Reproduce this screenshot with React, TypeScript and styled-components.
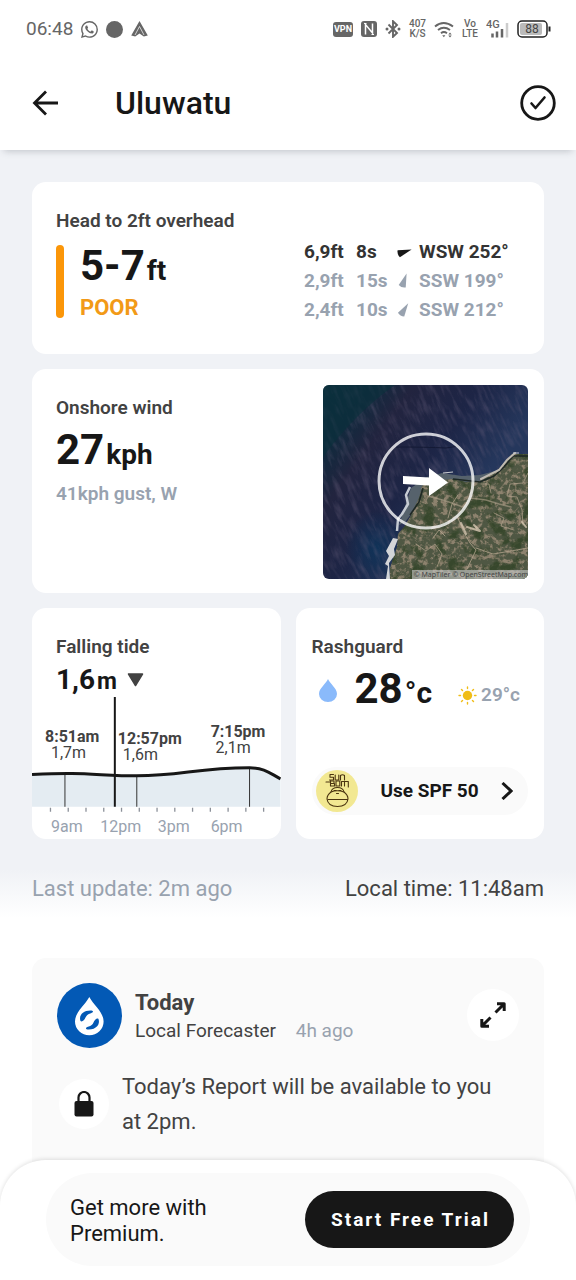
import React from "react";
import styled, { createGlobalStyle } from "styled-components";
import { BsWhatsapp } from "react-icons/bs";

const GlobalStyle = createGlobalStyle`
  *, *::before, *::after { box-sizing: border-box; }
  body {
    margin: 0;
    background: #fff;
    color: #171717;
    font-family: Roboto, "Liberation Sans", sans-serif;
  }
  h1, h2, p { margin: 0; }
  button { font: inherit; color: inherit; border: 0; padding: 0; background: none; cursor: pointer; }
  svg { display: block; }
`;

const ink = "#171717";
const charcoal = "#424242";
const slate = "#98a2af";

/* ---------- top of the page ---------- */

const StatusBar = styled.div`
  display: flex;
  align-items: center;
  justify-content: space-between;
  height: 58px;
  padding: 0 25px 0 26px;
  color: #666;
`;

const StatusGroup = styled.div<{ $gap: number }>`
  display: flex;
  align-items: center;
  gap: ${(p) => p.$gap}px;
`;

const Clock = styled.span`
  font-size: 19px;
  line-height: 24px;
`;

const Dot = styled.span`
  width: 17px;
  height: 17px;
  border-radius: 50%;
  background: #666;
`;

const VpnTag = styled.span`
  padding: 0 1px;
  border-radius: 3px;
  background: #666;
  color: #fff;
  font-size: 9px;
  font-weight: 700;
  line-height: 15px;
`;

const TinyStack = styled.span`
  display: flex;
  flex-direction: column;
  align-items: center;
  font-size: 10px;
  font-weight: 500;
  line-height: 10px;
`;

const Header = styled.header`
  position: relative;
  display: flex;
  align-items: center;
  height: 92px;
  padding: 0 20px 2px 32px;
  box-shadow: 0 5px 7px -4px rgba(60, 70, 80, 0.28);
`;

const PlaceName = styled.h1`
  flex: 1;
  padding-left: 57px;
  font-size: 32px;
  font-weight: 500;
  line-height: 40px;
`;

/* ---------- conditions ---------- */

const Conditions = styled.section`
  display: flex;
  flex-direction: column;
  gap: 15px;
  padding: 32px 32px 15px;
  background: linear-gradient(to top, #fff, #f0f2f6 48px);
`;

const Card = styled.article`
  border-radius: 14px;
  background: #fff;
  overflow: hidden;
`;

const SurfCard = styled(Card)`
  display: flex;
  justify-content: space-between;
  padding: 26px 32px 30px 24px;
`;

const WindCard = styled(Card)`
  display: flex;
  justify-content: space-between;
  padding: 16px 16px 14px 24px;
`;

const Halves = styled.div`
  display: grid;
  grid-template-columns: 1fr 1fr;
  gap: 15px;
`;

const TideCard = styled(Card)`
  display: flex;
  flex-direction: column;
`;

const GearCard = styled(Card)`
  display: flex;
  flex-direction: column;
  padding: 26px 16px 24px;
`;

const Label = styled.h2`
  color: ${charcoal};
  font-size: 19px;
  font-weight: 600;
  line-height: 25px;
`;

const Reading = styled.p<{ $size: number; $line: number }>`
  font-size: ${(p) => p.$size}px;
  font-weight: 700;
  line-height: ${(p) => p.$line}px;
  white-space: nowrap;
`;

const Unit = styled.span<{ $size: number }>`
  margin-left: 2px;
  font-size: ${(p) => p.$size}px;
  line-height: 0;
`;

const Rating = styled.div`
  position: relative;
  margin-top: 12px;
  padding-left: 24px;

  &::before {
    content: "";
    position: absolute;
    inset: 0 auto 0 0;
    width: 8px;
    border-radius: 4px;
    background: #fb9609;
  }
`;

const RatingWord = styled.p`
  padding-top: 11px;
  color: #f29a17;
  font-size: 22px;
  font-weight: 700;
  line-height: 20px;
`;

const Swells = styled.div`
  display: flex;
  flex-direction: column;
  padding-top: 29px;
`;

const Swell = styled.div<{ $main?: boolean }>`
  display: grid;
  grid-template-columns: 52px 41px 22px 93px;
  align-items: center;
  color: ${(p) => (p.$main ? "#333" : slate)};
  font-size: 19px;
  font-weight: 700;
  line-height: 29px;
  white-space: nowrap;
`;

const WindText = styled.div`
  padding-top: 10px;
`;

const Gust = styled.p`
  padding-top: 2px;
  color: ${slate};
  font-size: 19px;
  font-weight: 600;
  line-height: 24px;
`;

const MapFrame = styled.figure`
  position: relative;
  flex: 0 0 205px;
  height: 194px;
  margin: 0;
  border-radius: 6px;
  overflow: hidden;
`;

const MapCredit = styled.figcaption`
  position: absolute;
  right: 0;
  bottom: 0;
  padding-left: 2px;
  background: rgba(205, 205, 205, 0.6);
  color: #444;
  font: 7px/9px "Noto Sans", sans-serif;
  white-space: nowrap;
`;

const TideHead = styled.div`
  padding: 26px 24px 0;
`;

const TideNow = styled.div`
  display: flex;
  align-items: center;
  gap: 10px;
  height: 38px;
  padding-top: 4px;
`;

const Temperatures = styled.div`
  display: flex;
  align-items: center;
  height: 60px;
`;

const WaterTemp = styled.div`
  display: flex;
  flex: 1;
  align-items: center;
  gap: 18px;
  padding-left: 7px;
`;

const AirTemp = styled.p`
  display: flex;
  align-items: center;
  gap: 4px;
  padding: 12px 8px 0 0;
  color: ${slate};
  font-size: 19px;
  font-weight: 600;
  line-height: 24px;
`;

const SunscreenLink = styled.a`
  display: flex;
  align-items: center;
  height: 48px;
  margin-top: auto;
  padding: 0 15px 0 4px;
  border-radius: 24px;
  background: #fafafa;
  color: ${ink};
  font-size: 19px;
  font-weight: 700;
  text-decoration: none;
  white-space: nowrap;

  span { flex: 1; padding-left: 23px; }
`;

const Times = styled.div`
  display: flex;
  justify-content: space-between;
  padding-top: 21px;
  color: ${charcoal};
  font-size: 22px;
  line-height: 28px;
`;

const Muted = styled.span`
  color: ${slate};
`;

/* ---------- report ---------- */

const Report = styled.section`
  display: grid;
  gap: 21px;
  margin: 40px 32px 0;
  padding: 25px 25px 80px;
  border-radius: 14px;
  background: #fafafa;
  color: ${charcoal};
`;

const ReportHead = styled.div`
  display: flex;
  align-items: center;
  gap: 13px;
`;

const Byline = styled.div`
  flex: 1;
  padding-top: 4px;
  font-size: 19px;
  line-height: 28px;
`;

const ReportTitle = styled.h2`
  font-size: 22px;
  font-weight: 700;
  line-height: 28px;
`;

const Ago = styled(Muted)`
  padding-left: 15px;
`;

const RoundButton = styled.button`
  display: grid;
  place-items: center;
  width: 52px;
  height: 52px;
  border-radius: 50%;
  background: #fff;
`;

const ReportBody = styled.div`
  display: flex;
  align-items: center;
  gap: 13px;
  padding: 0 16px 0 2px;
  font-size: 22px;
  line-height: 35px;
`;

const LockBadge = styled.span`
  display: grid;
  flex: none;
  place-items: center;
  width: 50px;
  height: 50px;
  border-radius: 50%;
  background: #fff;
`;

/* ---------- premium sheet ---------- */

const Sheet = styled.aside`
  position: fixed;
  inset: auto 0 0;
  padding: 13px 46px 14px;
  border-radius: 46px 46px 0 0;
  background: #fff;
  box-shadow: 0 -1px 4px rgba(0, 0, 0, 0.12);
`;

const Offer = styled.div`
  display: flex;
  align-items: center;
  justify-content: space-between;
  padding: 18px 16px 18px 24px;
  border-radius: 47px;
  background: #fafafa;
`;

const OfferText = styled.p`
  max-width: 170px;
  padding-top: 3px;
  font-size: 22px;
  line-height: 26px;
`;

const TrialButton = styled.button`
  width: 209px;
  height: 57px;
  padding-left: 2px;
  border-radius: 29px;
  background: #171717;
  color: #fff;
  font-size: 19px;
  font-weight: 700;
  letter-spacing: 2px;
`;

/* ---------- drawings ---------- */

const NavMark = () => (
  <svg width="17" height="16" viewBox="0 0 17 16">
    <path d="M8.500 0L16.800 14.500l-4 1-4.300-3-4.300 3-4-1z" fill="#666" />
    <path d="M8.500 5.500l-4.500 8.500M8.500 5.500l4.500 8.500" stroke="#fff" strokeWidth="0.700" />
  </svg>
);

const NfcMark = () => (
  <svg width="16" height="16" viewBox="0 0 16 16">
    <rect width="16" height="16" rx="3" fill="#666" />
    <path d="M4.500 13.500V3.500L11.500 12V2.500" fill="none" stroke="#fff" strokeWidth="1.500" />
    <path d="M3 2.500h2.500M10.500 13.500H13" fill="none" stroke="#fff" strokeWidth="1" />
  </svg>
);

const BluetoothMark = () => (
  <svg width="16" height="18" viewBox="0 0 16 18">
    <path d="M3.500 4.500L12 13 8 16.800V1.200L12 5 3.500 13.500" fill="none" stroke="#666" strokeWidth="1.900" />
    <circle cx="2" cy="9" r="1.500" fill="#666" />
    <circle cx="14" cy="9" r="1.500" fill="#666" />
  </svg>
);

const WifiMark = () => (
  <svg width="20" height="17" viewBox="0 0 20 17" fill="none" stroke="#666" strokeWidth="2">
    <path d="M1 5.500Q9.500-1.500 19 5.500M4 9Q9.800 4.500 16 9M7 12.200Q9.800 10 13 12.200" />
    <path d="M8.200 14.200h3.200l-1.600 2z" fill="#666" stroke="none" />
    <path d="M14.300 13.500l1.700-2 1.700 2zM14.300 14.500l1.700 2 1.700-2z" fill="#666" stroke="none" />
  </svg>
);

const SignalMark = () => (
  <svg width="23" height="20" viewBox="0 0 23 20">
    <text x="0" y="9" fill="#666" fontSize="11" fontWeight="500">4G</text>
    <path d="M6.500 18.500v-4M11 18.500v-6M16 18.500V10" stroke="#666" strokeWidth="2.500" />
    <path d="M21 18.500V4" stroke="#ccc" strokeWidth="2.500" />
  </svg>
);

const BatteryMark = () => (
  <svg width="34" height="18" viewBox="0 0 34 18">
    <rect x="1" y="1" width="29" height="16" rx="4" fill="#fff" stroke="#222" strokeWidth="1.500" />
    <rect x="3" y="3" width="22" height="12" rx="2" fill="#bbb" />
    <path d="M32.500 6.500v5" stroke="#222" strokeWidth="2" />
    <text x="15" y="13" textAnchor="middle" fontSize="12" fill="#444">88</text>
  </svg>
);

const SwellArrow = ({ turn, color }: { turn: number; color: string }) => (
  <svg width="16" height="16" viewBox="-7 -8 16 16">
    <path d="M0-8L3.700 5.500Q0 7.500-3.700 5.500z" fill={color} transform={`rotate(${turn})`} />
  </svg>
);

const Satellite = () => (
  <svg width="100%" height="100%" viewBox="0 0 205 194" preserveAspectRatio="xMidYMid slice" role="img" aria-label="Satellite map with onshore wind arrow">
    <defs>
      <linearGradient id="sea" x1="0" y1="0" x2="1" y2="0.700">
        <stop offset="0" stopColor="#0b303c" />
        <stop offset="0.160" stopColor="#102a3d" />
        <stop offset="0.300" stopColor="#22243f" />
        <stop offset="0.520" stopColor="#1d2546" />
        <stop offset="0.750" stopColor="#25375c" />
        <stop offset="1" stopColor="#25375c" />
      </linearGradient>
      <radialGradient id="deep">
        <stop offset="0" stopColor="#0e345a" stopOpacity="0.900" />
        <stop offset="1" stopColor="#0e345a" stopOpacity="0" />
      </radialGradient>
      <filter id="swellGrain" x="0" y="0" width="1" height="1" colorInterpolationFilters="sRGB">
        <feTurbulence type="fractalNoise" baseFrequency="0.220 0.050" numOctaves="4" seed="4" />
        <feColorMatrix values="0 0 0 0 0.400  0 0 0 0 0.370  0 0 0 0 0.480  2.400 0 0 0 -1.050" />
      </filter>
      <filter id="fields" x="0" y="0" width="1" height="1" colorInterpolationFilters="sRGB">
        <feTurbulence type="fractalNoise" baseFrequency="0.200" numOctaves="4" seed="11" />
        <feColorMatrix values="0 0 0 0 0.660  0 0 0 0 0.580  0 0 0 0 0.500  5 0 0 0 -2.350" />
      </filter>
      <filter id="trees" x="0" y="0" width="1" height="1" colorInterpolationFilters="sRGB">
        <feTurbulence type="fractalNoise" baseFrequency="0.080" numOctaves="5" seed="23" />
        <feColorMatrix values="0 0 0 0 0.200  0 0 0 0 0.270  0 0 0 0 0.160  0 5 0 0 -2.550" />
      </filter>
      <clipPath id="land">
        <path d="M205 69L189 69 181 78 174 86 157 96 143 97 130 94 119 95 106 95 99 101 96 113 89 128 82 141 75 149 74 162 70 174 67 183 67 194H205z" />
      </clipPath>
      <clipPath id="frame"><rect width="205" height="194" /></clipPath>
    </defs>
    <rect width="205" height="194" fill="url(#sea)" />
    <ellipse cx="54" cy="164" rx="32" ry="38" fill="url(#deep)" />
    <g clipPath="url(#frame)">
      <rect x="-80" y="-80" width="370" height="370" filter="url(#swellGrain)" transform="rotate(-24 102 97)" opacity="0.400" />
    </g>
    <path d="M0 0H72Q32 28 0 72z" fill="#0b303c" opacity="0.650" />
    <path d="M88 103L104 92 119 88 139 91 157 90 172 86 158 97 130 98 106 100 95 120 82 137 76 140z" fill="#56626c" />
    <g clipPath="url(#land)">
      <rect width="205" height="194" fill="#4f5743" />
      <rect width="205" height="194" filter="url(#fields)" opacity="0.700" />
      <rect width="205" height="194" filter="url(#trees)" opacity="0.850" />
      <g fill="none" stroke="#b3a48d" strokeLinejoin="round" strokeLinecap="round">
        <path d="M105 111L123 116 140 122 148 113 163 115 176 119 188 122" strokeWidth="1.400" opacity="0.600" />
        <path d="M125 133L129 119 135 110M110 153L116 145 122 151M135 133L140 146 147 158 153 165 144 184M153 163L170 169 188 166 205 163" strokeWidth="1" opacity="0.800" />
        <path d="M205 88L200 98 187 99 184 111 194 112 199 125 200 140M158 99L166 99 168 108M93 159L103 166 112 159 119 169 114 182M171 128L181 133 178 141 191 145" strokeWidth="1" opacity="0.700" />
        <path d="M138 138L143 149M144 142L157 146 151 140M199 137L203 142" strokeWidth="2" stroke="#d5c6b0" opacity="0.800" />
      </g>
    </g>
    <path d="M205 71H190L181 82 171 91 157 97 130 94M100 103L96 117 87 130" fill="none" stroke="#1e2825" strokeWidth="1.600" />
    <path d="M192 68L184 75 176 85 158 94" fill="none" stroke="#bfbab2" strokeWidth="2" strokeLinecap="round" />
    <path d="M190 68h6M120 88l10-1" stroke="#cbcdd0" strokeWidth="1" />
    <path d="M87 102L83 110 85 119 79 129 75 134 74 146" fill="none" stroke="#c5cad2" strokeWidth="2.500" strokeLinejoin="round" />
    <path d="M70 153L75 154 71 164 72 170 66 178 67 194H63L65 181 62 179 66 171 63 166z" fill="#d3d5d7" />
    <path d="M73 62Q103 62 123 63L136 61" fill="none" stroke="#141a35" strokeWidth="1" />
    <circle cx="103" cy="96" r="47" fill="none" stroke="#fff" strokeOpacity="0.780" strokeWidth="3" />
    <path d="M80 91L106 92.500V83L125 97.500 106 111V100.500L80 99z" fill="#fff" />
  </svg>
);

type TidePoint = { x: number; time: string; height: string; tx: number; hx: number; y: number; top: number };

const tides: TidePoint[] = [
  { x: 33, time: "8:51am", height: "1,7m", tx: 13, hx: 19, y: 45, top: 77 },
  { x: 105, time: "12:57pm", height: "1,6m", tx: 86, hx: 91, y: 47, top: 79 },
  { x: 218, time: "7:15pm", height: "2,1m", tx: 179, hx: 184, y: 40, top: 71 },
];

const hours = [
  { x: 35, name: "9am" },
  { x: 89, name: "12pm" },
  { x: 142, name: "3pm" },
  { x: 195, name: "6pm" },
];

const curve = "M0 77.700C15 77 28 76.500 40 76.700C62 77 82 79 105 79C150 79 165 71 218 71C234 71 239 77 249 82";

const TideChart = () => (
  <svg width="100%" viewBox="0 0 249 142" role="img" aria-label="Tide chart">
    <path d={`${curve}V110H0z`} fill="#e4ecf2" />
    {tides.map((t) => (
      <g key={t.time} fill={charcoal} fontSize="16">
        <path d={`M${t.x} ${t.top}V110`} stroke="#333" strokeWidth="1" />
        <text x={t.tx} y={t.y} fontWeight="700">{t.time}</text>
        <text x={t.hx} y={t.y + 16}>{t.height}</text>
      </g>
    ))}
    <path d={curve} fill="none" stroke={ink} strokeWidth="3" />
    <path d="M83 0V110" stroke={ink} strokeWidth="2" />
    {Array.from({ length: 13 }, (_, i) => (
      <path key={i} d={`M${18.500 + i * 17.800} 111v4`} stroke="#8b9099" strokeWidth="1.300" />
    ))}
    {hours.map((h) => (
      <text key={h.name} x={h.x} y="135" textAnchor="middle" fontSize="16" fill={slate}>{h.name}</text>
    ))}
  </svg>
);

const SunMark = () => (
  <svg width="19" height="19" viewBox="-9.500 -9.500 19 19">
    <circle r="4.700" fill="#f0bd17" />
    {[0, 45, 90, 135, 180, 225, 270, 315].map((a) => (
      <path key={a} d="M0-7v-1.500" stroke="#f0bd17" strokeWidth="1.400" strokeLinecap="round" transform={`rotate(${a})`} />
    ))}
  </svg>
);

const SunBumLogo = () => (
  <svg width="42" height="42" viewBox="0 0 42 42" aria-hidden="true">
    <circle cx="21" cy="21" r="21" fill="#f2e892" />
    <g fill="none" stroke="#4b3510" strokeWidth="1.100" strokeLinecap="round" strokeLinejoin="round">
      <path d="M17.500 4.500H14v2.800h3.500V10H13.500M19.200 5v5h3.600V5M24.500 10V5.500q2-1.500 4 0V10" />
      <path d="M10 12h4M14.500 10.500v5.500h4v-2.500h-4M18 13.500V11h-3M20 11h3.800v5H20zM25.500 16v-4.500h3V16M28.500 11.500h3.800V17" />
      <path d="M15 22Q16 17.500 21.500 17.500T28 22Q32 25 32 29Q31 36.500 21.500 36.500T11 29Q11 25 15 22z" />
      <path d="M15 22Q21 19.500 28 22M12 29.500H31.500M18 20.500h2M23 20.500h2M20.500 23.500h2" />
    </g>
  </svg>
);

const ForecasterLogo = () => (
  <svg width="65" height="65" viewBox="0 0 65 65" aria-hidden="true">
    <circle cx="32.500" cy="32.500" r="32.500" fill="#0359b5" />
    <path d="M32.300 14C28 22 18 29 18 38.500a14.300 13.800 0 0 0 28.600 0C46.600 29 36.600 22 32.300 14z" fill="#fff" />
    <path d="M23.500 38C21.500 32.500 26 27 34.500 27.500C37 28 36 29.800 34 30.200C30.500 31 29.500 32.500 28.500 34.500C27.500 37 25 39.500 23.500 38z" fill="#0359b5" />
    <path d="M41.500 36C43.500 41.500 39 47 30.500 46.500C28 46 29 44.200 31 43.800C34.500 43 35.500 41.500 36.500 39.500C37.500 37 40 34.500 41.500 36z" fill="#0359b5" />
  </svg>
);

export default function App() {
  return (
    <>
      <GlobalStyle />
      <StatusBar>
        <StatusGroup $gap={8}>
          <Clock>06:48</Clock>
          <BsWhatsapp size={17} />
          <Dot />
          <NavMark />
        </StatusGroup>
        <StatusGroup $gap={8}>
          <VpnTag>VPN</VpnTag>
          <NfcMark />
          <BluetoothMark />
          <TinyStack><span>407</span><span>K/S</span></TinyStack>
          <WifiMark />
          <TinyStack><span>Vo</span><span>LTE</span></TinyStack>
          <SignalMark />
          <BatteryMark />
        </StatusGroup>
      </StatusBar>

      <Header>
        <button type="button" aria-label="Back">
          <svg width="26" height="26" viewBox="0 0 26 26" fill="none" stroke={ink} strokeWidth="2.800">
            <path d="M14 1.500L2.500 13 14 24.500M2.500 13H26" />
          </svg>
        </button>
        <PlaceName>Uluwatu</PlaceName>
        <button type="button" aria-label="Saved">
          <svg width="36" height="36" viewBox="0 0 36 36" fill="none" stroke={ink}>
            <circle cx="18" cy="18" r="16.300" strokeWidth="2.800" />
            <path d="M11.500 18.500l4 4.500 9-10.500" strokeWidth="2.600" strokeLinecap="round" strokeLinejoin="round" />
          </svg>
        </button>
      </Header>

      <main>
        <Conditions>
          <SurfCard>
            <div>
              <Label>Head to 2ft overhead</Label>
              <Rating>
                <Reading $size={42} $line={42}>5-7<Unit $size={28}>ft</Unit></Reading>
                <RatingWord>POOR</RatingWord>
              </Rating>
            </div>
            <Swells>
              <Swell $main>
                <span>6,9ft</span><span>8s</span><SwellArrow turn={72} color={ink} /><span>WSW 252°</span>
              </Swell>
              <Swell>
                <span>2,9ft</span><span>15s</span><SwellArrow turn={19} color={slate} /><span>SSW 199°</span>
              </Swell>
              <Swell>
                <span>2,4ft</span><span>10s</span><SwellArrow turn={32} color={slate} /><span>SSW 212°</span>
              </Swell>
            </Swells>
          </SurfCard>

          <WindCard>
            <WindText>
              <Label>Onshore wind</Label>
              <Reading $size={42} $line={60}>27<Unit $size={28}>kph</Unit></Reading>
              <Gust>41kph gust, W</Gust>
            </WindText>
            <MapFrame>
              <Satellite />
              <MapCredit>© MapTiler © OpenStreetMap.com</MapCredit>
            </MapFrame>
          </WindCard>

          <Halves>
            <TideCard>
              <TideHead>
                <Label>Falling tide</Label>
                <TideNow>
                  <Reading $size={28} $line={34}>1,6<Unit $size={23}>m</Unit></Reading>
                  <svg width="17" height="14" viewBox="0 0 17 14">
                    <path d="M1.500 1h14l-7 11.500z" fill={charcoal} stroke={charcoal} strokeWidth="1.500" strokeLinejoin="round" />
                  </svg>
                </TideNow>
              </TideHead>
              <TideChart />
            </TideCard>

            <GearCard>
              <Label>Rashguard</Label>
              <Temperatures>
                <WaterTemp>
                  <svg width="18" height="25" viewBox="0 0 18 25">
                    <path d="M9 2C7 7 0 11 0 17a9 8 0 0 0 18 0C18 11 11 7 9 2z" fill="#8abafb" />
                  </svg>
                  <Reading $size={42} $line={48}>28<Unit $size={30}>°c</Unit></Reading>
                </WaterTemp>
                <AirTemp><SunMark />29°c</AirTemp>
              </Temperatures>
              <SunscreenLink href="#sunscreen">
                <SunBumLogo />
                <span>Use SPF 50</span>
                <svg width="12" height="18" viewBox="0 0 12 18" fill="none" stroke={ink} strokeWidth="3">
                  <path d="M1.500 1l8.500 8-8.500 8" />
                </svg>
              </SunscreenLink>
            </GearCard>
          </Halves>

          <Times>
            <Muted>Last update: 2m ago</Muted>
            <span>Local time: 11:48am</span>
          </Times>
        </Conditions>

        <Report>
          <ReportHead>
            <ForecasterLogo />
            <Byline>
              <ReportTitle>Today</ReportTitle>
              Local Forecaster <Ago>4h ago</Ago>
            </Byline>
            <RoundButton type="button" aria-label="Expand report">
              <svg width="26" height="26" viewBox="0 0 26 26" fill="none" stroke={ink} strokeWidth="3" strokeLinejoin="round">
                <path d="M15.500 10.500l8.500-8.500M17 1.800h7.200V9M10.500 15.500L2 24M1.800 17v7.200H9" />
              </svg>
            </RoundButton>
          </ReportHead>
          <ReportBody>
            <LockBadge>
              <svg width="20" height="26" viewBox="0 0 20 26">
                <rect x="0.500" y="10" width="19" height="15.500" rx="2" fill={ink} />
                <path d="M4.500 11V6.500a5.500 5.500 0 0 1 11 0V11" fill="none" stroke={ink} strokeWidth="2.200" />
              </svg>
            </LockBadge>
            <p>Today’s Report will be available to you at 2pm.</p>
          </ReportBody>
        </Report>
      </main>

      <Sheet>
        <Offer>
          <OfferText>Get more with Premium.</OfferText>
          <TrialButton type="button">Start Free Trial</TrialButton>
        </Offer>
      </Sheet>
    </>
  );
}
